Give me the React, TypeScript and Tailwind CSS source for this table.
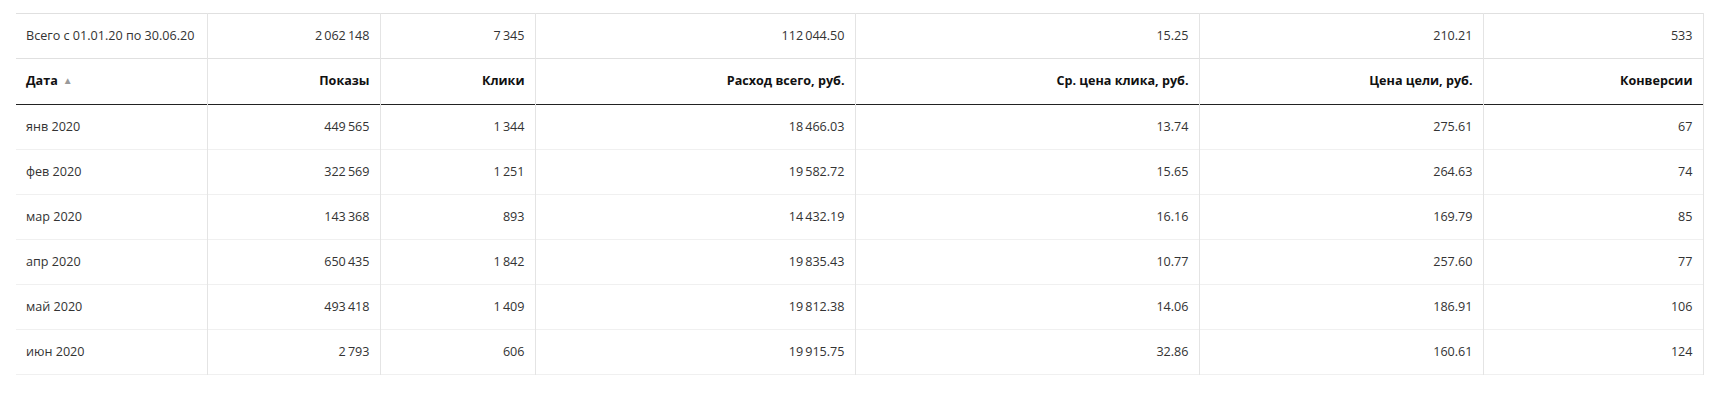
import React from 'react';

// --- DATA ---

const COLS = [
  { key: 'date', title: 'Дата', width: 'w-[191px]', sort: true },
  { key: 'shows', title: 'Показы', width: 'w-[173px]' },
  { key: 'clicks', title: 'Клики', width: 'w-[155px]' },
  { key: 'cost', title: 'Расход всего, руб.', width: 'w-[320px]' },
  { key: 'cpc', title: 'Ср. цена клика, руб.', width: 'w-[344px]' },
  { key: 'goal', title: 'Цена цели, руб.', width: 'w-[284px]' },
  { key: 'conv', title: 'Конверсии', width: 'w-[220px]' },
];

const TOTAL = ['Всего с 01.01.20 по 30.06.20', '2\u2009062\u2009148', '7\u2009345', '112\u2009044.50', '15.25', '210.21', '533'];

const ROWS = [
  ['янв 2020', '449\u2009565', '1\u2009344', '18\u2009466.03', '13.74', '275.61', '67'],
  ['фев 2020', '322\u2009569', '1\u2009251', '19\u2009582.72', '15.65', '264.63', '74'],
  ['мар 2020', '143\u2009368', '893', '14\u2009432.19', '16.16', '169.79', '85'],
  ['апр 2020', '650\u2009435', '1\u2009842', '19\u2009835.43', '10.77', '257.60', '77'],
  ['май 2020', '493\u2009418', '1\u2009409', '19\u2009812.38', '14.06', '186.91', '106'],
  ['июн 2020', '2\u2009793', '606', '19\u2009915.75', '32.86', '160.61', '124'],
];

// --- CELLS ---

const cellBase = 'px-[10px] border-[#e4e4e4] whitespace-nowrap';

const cellSide = (i: number) =>
  i === 0 ? 'text-left' : i === COLS.length - 1 ? 'text-right border-l border-r' : 'text-right border-l';

export default function App() {
  return (
    <div className="w-[1721px] h-[405px] bg-white pt-[13px] pl-[16px] font-['Open_Sans','Liberation_Sans',sans-serif] text-[12.6px] text-[#333]">
      <table className="table-fixed border-collapse w-[1687px]">
        <colgroup>
          {COLS.map(c => <col key={c.key} className={c.width} />)}
        </colgroup>
        <tbody>
          {/* Totals row */}
          <tr className="h-[45px] border-t border-b border-[#e0e0e0]">
            {TOTAL.map((v, i) => (
              <td key={i} className={`${cellBase} ${cellSide(i)}`}>{v}</td>
            ))}
          </tr>

          {/* Header */}
          <tr className="h-[46px] border-b border-[#222]">
            {COLS.map((c, i) => (
              <th key={c.key} className={`${cellBase} ${cellSide(i)} font-bold text-[#111]`}>
                {c.title}
                {c.sort && <span className="ml-[5px] text-[10px] text-[#9a9a9a] align-[1px]">▲</span>}
              </th>
            ))}
          </tr>

          {/* Data rows */}
          {ROWS.map((r, ri) => (
            <tr key={ri} className="h-[45px] border-b border-[#f0f0f0]">
              {r.map((v, i) => (
                <td key={i} className={`${cellBase} ${cellSide(i)}`}>{v}</td>
              ))}
            </tr>
          ))}
        </tbody>
      </table>
    </div>
  );
}
